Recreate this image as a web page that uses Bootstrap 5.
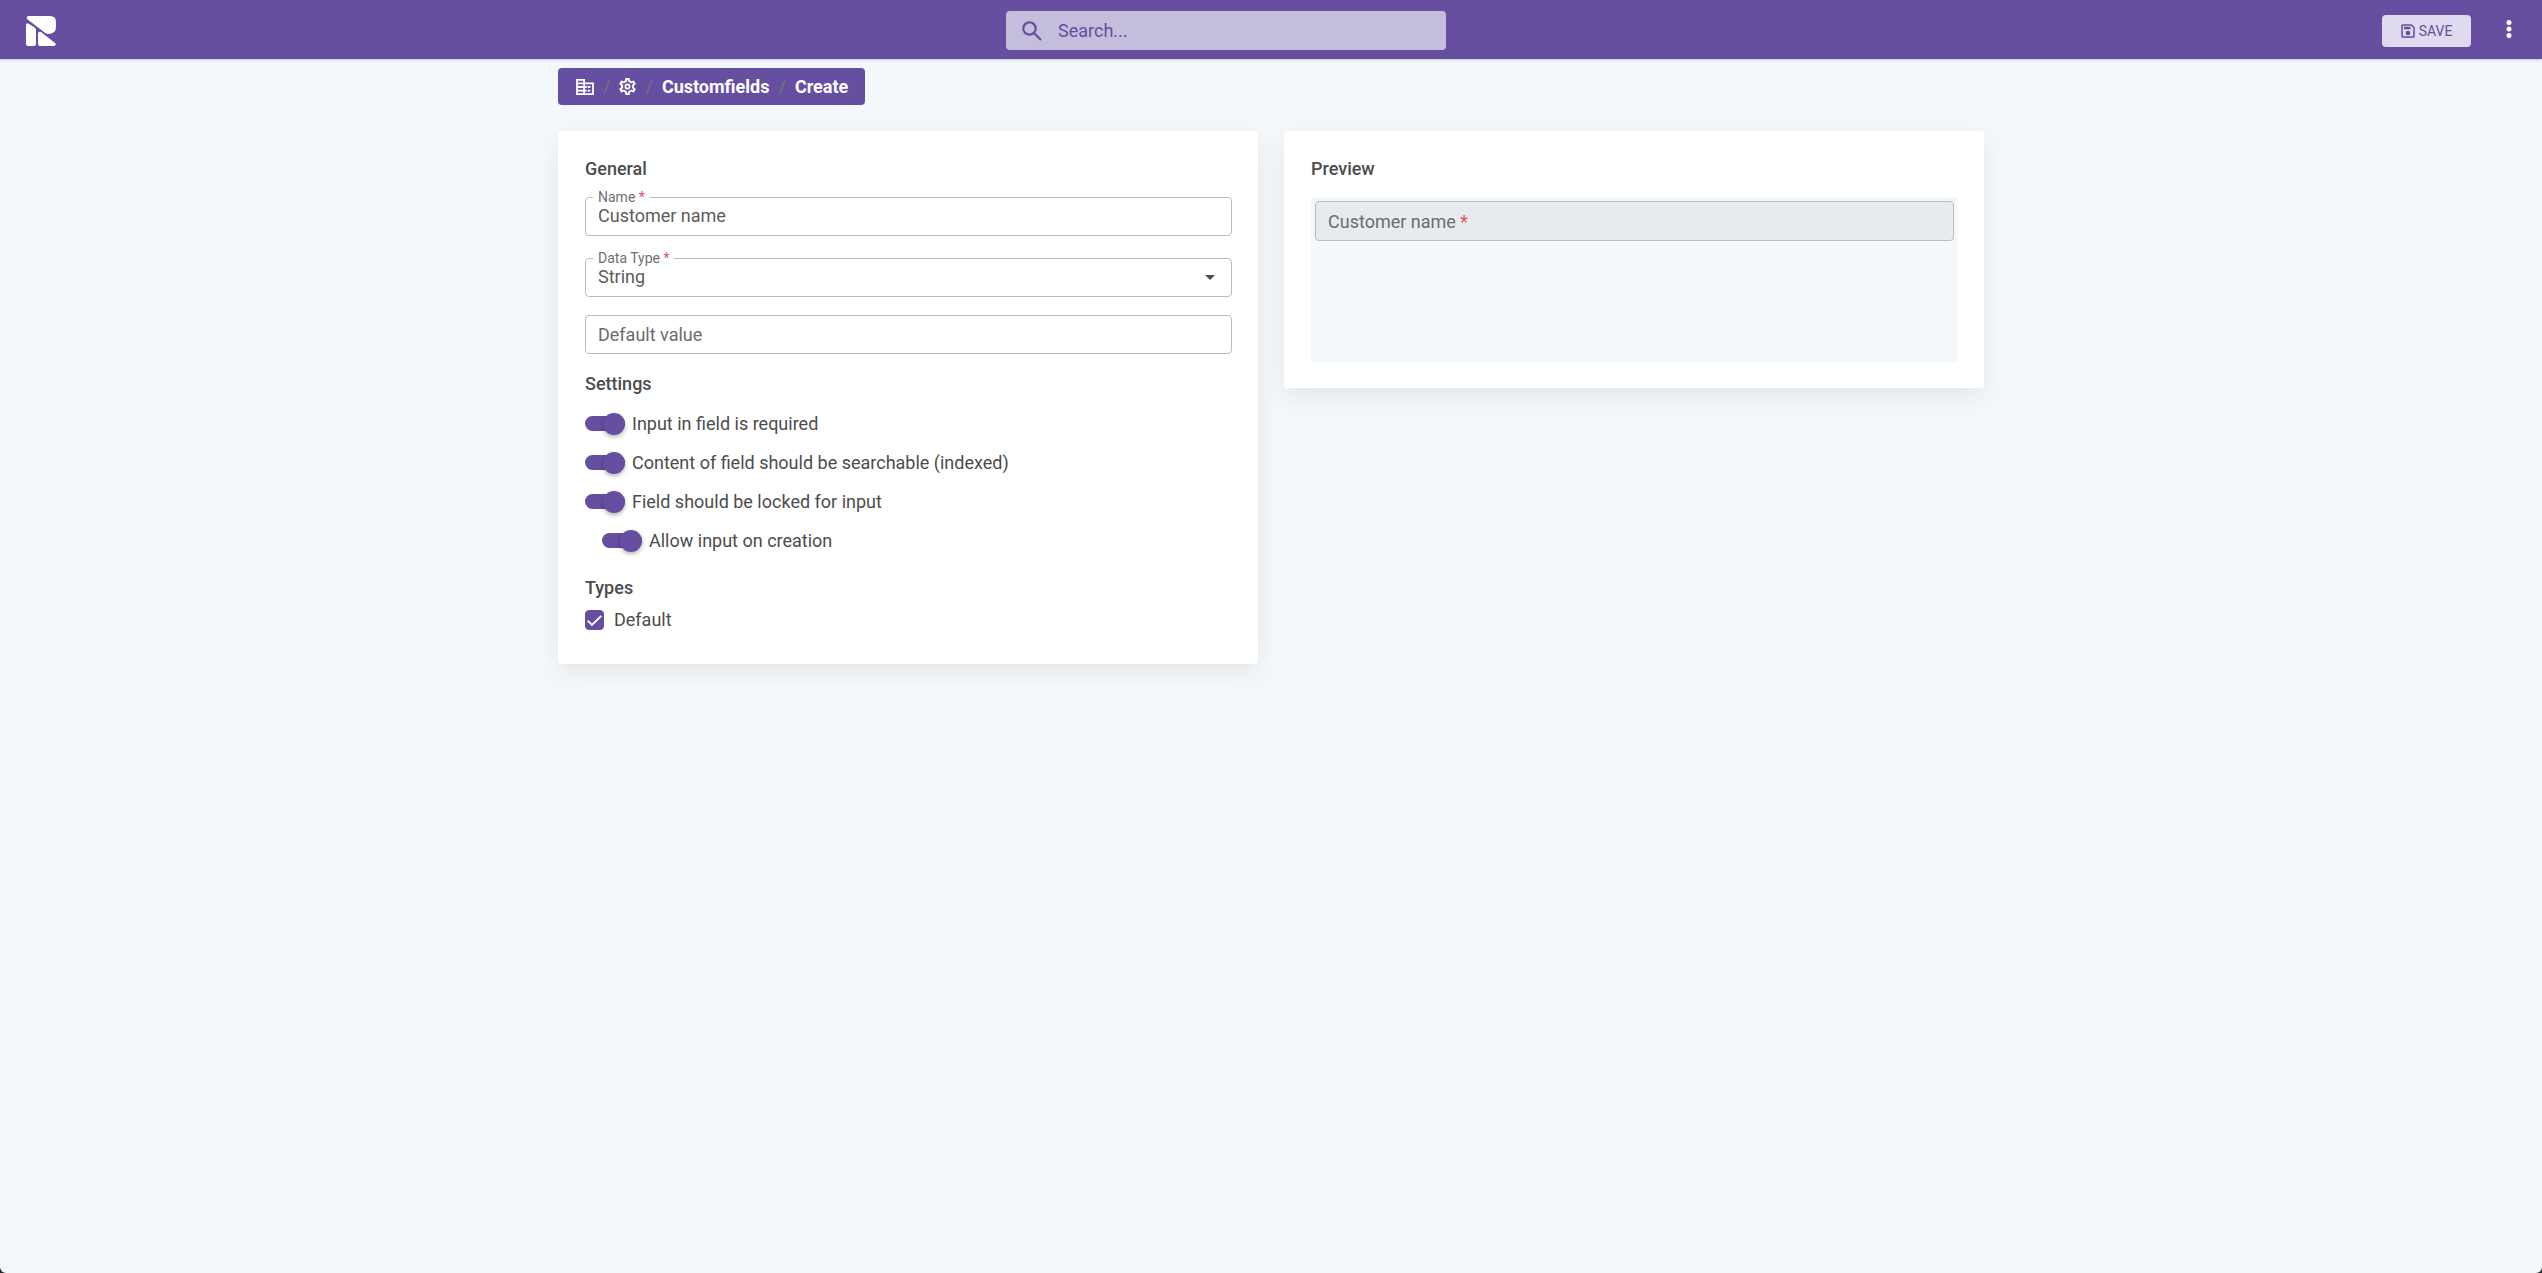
<!DOCTYPE html>
<html lang="en">
<head>
<meta charset="utf-8">
<meta name="viewport" content="width=device-width, initial-scale=1">
<title>Customfields - Create</title>
<link href="https://cdn.jsdelivr.net/npm/bootstrap@5.3.0/dist/css/bootstrap.min.css" rel="stylesheet">
<style>
:root { --brand: #664ea1; --page: #f4f8fb; --line: #bcbcbc; --ink: #4c4c4c; }
html { background: #26282b; }
body { min-height: 100vh; background: var(--page); color: var(--ink); font: 400 18px/24px Roboto, "Liberation Sans", sans-serif; border-radius: 0 0 6px 6px; }
.topbar { height: 59px; padding-top: 2px; background: var(--brand); box-shadow: 0 1px 3px rgba(0,0,0,.2); }
.topbar-start { flex: 0 0 calc(50% - 265px); padding-left: 26px; }
.topbar-search { width: 440px; height: 39px; padding: 0 16px; border-radius: 4px; background: #c5bddc; color: var(--brand); }
.topbar-search input { padding: 0; border: 0; background: none; color: inherit; font-size: 18px; line-height: 24px; outline: 0; }
.topbar-search input::placeholder { color: var(--brand); opacity: 1; }
.btn-save { width: 89px; height: 32px; padding: 0; border-radius: 4px; border: 0; background: #e0daf1; color: var(--brand); font-size: 14px; line-height: 20px; }
.btn-menu { width: 71px; height: 57px; padding: 0 0 4px 4px; border: 0; }
.page-wrap { max-width: 1426px; }
.crumbs { height: 37px; padding: 0 17px 0 18px; margin: 9px 0 26px; border-radius: 4px; background: var(--brand); color: #fff; font-weight: 700; }
.crumbs a { color: #fff; text-decoration: none; }
.crumbs li + li::before { content: "/"; color: #757575; font-weight: 400; padding: 0 9px; }
.panels { display: grid; grid-template-columns: repeat(auto-fit, minmax(min(100%, 500px), 1fr)); gap: 26px; align-items: start; }
.panel { padding: 26px; border: 0; border-radius: 4px; box-shadow: 0 9px 26px rgba(0,0,0,.07); color: inherit; }
.panel-inner { padding-left: 1px; }
.panel h2 { margin: 0 0 16px; font-size: 18px; line-height: 24px; font-weight: 500; }
.panel h2.tight { margin-bottom: 8px; }
.field-gap { margin-bottom: 22px; }
.field-gap-sm { margin-bottom: 18px; }
.outlined { position: relative; }
.outlined .form-control, .outlined .form-select { height: 39px; padding: 0 12px; border: 1px solid var(--line); border-radius: 4px; color: #5c5c5c; font-size: 18px; line-height: 24px; }
.outlined .has-float { padding-bottom: 2px; }
.outlined .form-control::placeholder { color: #6c6c6c; opacity: 1; }
.outlined .form-select { background: #fff url("data:image/svg+xml,%3Csvg xmlns='http://www.w3.org/2000/svg' viewBox='0 0 10 5'%3E%3Cpath fill='%234c4c4c' d='M0 0h10L5 5z'/%3E%3C/svg%3E") no-repeat right 16px center / 10px 5px; }
.outlined > .float-label { position: absolute; left: 8px; top: -9px; padding: 0 5px; background: #fff; color: #707070; font-size: 14px; line-height: 18px; }
.outlined > .inner-label { position: absolute; left: 13px; top: 9px; color: #6c6c6c; }
.outlined .form-control:disabled { height: 40px; background: #e8ebed; }
.req { color: #e5505c; }
.toggle-row { display: flex; align-items: center; gap: 7px; height: 39px; }
.toggle-row .form-check-input { flex: none; width: 40px; height: 15px; margin: 0; border: 0; border-radius: 8px; background: #bdbdbd; }
.toggle-row .form-check-input::before { content: ""; display: block; width: 22px; height: 22px; margin: -3px 0 0; border-radius: 50%; background: #fff; box-shadow: 0 2px 4px rgba(0,0,0,.3); }
.toggle-row .form-check-input:checked { background: var(--brand); }
.toggle-row .form-check-input:checked::before { margin-left: 18px; background: var(--brand); }
.toggle-sub { padding-left: 17px; }
.tick-row { display: flex; align-items: center; gap: 10px; height: 24px; margin-bottom: 6px; }
.tick-row .form-check-input { width: 19px; height: 20px; margin: 0; border-radius: 4px; }
.tick-row .form-check-input:checked { border-color: var(--brand); background: var(--brand) url("data:image/svg+xml,%3Csvg xmlns='http://www.w3.org/2000/svg' viewBox='0 0 20 20'%3E%3Cpath fill='none' stroke='%23fff' stroke-width='2.2' d='M2 10.2l5 5L18 4.5'/%3E%3C/svg%3E") center / 100% no-repeat; }
.preview-area { min-height: 165px; padding: 4px; background: var(--page); }
</style>
</head>
<body>
<header class="topbar d-flex align-items-center">
  <div class="topbar-start d-flex">
    <a href="#" class="d-flex" aria-label="Home">
      <svg width="30" height="30" viewBox="0 0 30 30" fill="#fff"><path d="M2 0H24Q30 0 30 6V11Q30 18 22 18Q20 18 18 16L1 3Q0 1 2 0Z"/><path d="M0 9Q0 6 3 8L8 11Q10 12 10 14V28Q10 30 8 30H2Q0 30 0 28Z"/><path d="M12 28V18Q12 15 15 16L29 27Q31 29 28 30H14Q12 30 12 28Z"/></svg>
    </a>
  </div>
  <form class="topbar-search d-flex align-items-center gap-3" role="search">
    <svg class="flex-shrink-0" width="20" height="20" viewBox="0 0 20 20" fill="none" stroke="#664ea1" stroke-width="2.200"><circle cx="7.500" cy="7.500" r="6.200"/><path d="M12 12l7 7"/></svg>
    <input class="w-100" type="search" placeholder="Search..." aria-label="Search">
  </form>
  <div class="d-flex align-items-center ms-auto">
    <button type="button" class="btn btn-save d-flex align-items-center justify-content-center gap-1">
      <svg width="14" height="14" viewBox="0 0 14 14" fill="none" stroke="#664ea1" stroke-width="1.500"><path d="M1.700 1h8.800L13 3.500v8.800q0 .7-.7.700H1.700q-.7 0-.7-.7V1.700q0-.7.7-.7z"/><path d="M3 4h6.500" stroke-width="2.500"/><circle cx="7" cy="9" r="1.600" fill="#664ea1"/></svg><span>SAVE</span>
    </button>
    <button type="button" class="btn btn-menu" aria-label="More"><svg width="6" height="18" viewBox="0 0 6 18" fill="#fff"><circle cx="3" cy="2.500" r="2.500"/><circle cx="3" cy="9" r="2.500"/><circle cx="3" cy="15.500" r="2.500"/></svg></button>
  </div>
</header>
<main class="page-wrap mx-auto">
  <nav class="d-flex" aria-label="breadcrumb">
    <ol class="crumbs list-unstyled d-flex align-items-center">
      <li class="d-flex align-items-center"><a href="#" class="d-flex" aria-label="Company"><svg width="18" height="16" viewBox="2 3 20 18" fill="#fff"><path d="M12 7V3H2v18h20V7H12zM10 19H4v-2h6v2zm0-4H4v-2h6v2zm0-4H4V9h6v2zm0-4H4V5h6v2zm10 12h-8v-2h2v-2h-2v-2h2v-2h-2V9h8v10zm-2-8h-3v2h3v-2zm0 4h-3v2h3v-2z"/></svg></a></li>
      <li class="d-flex align-items-center"><a href="#" class="d-flex" aria-label="Settings"><svg width="17" height="17" viewBox="2 2 20 20" fill="#fff"><path d="M19.430 12.980c.04-.32.07-.64.07-.98s-.03-.66-.07-.98l2.110-1.650c.19-.15.24-.42.12-.64l-2-3.460c-.12-.22-.39-.3-.61-.22l-2.490 1c-.52-.4-1.080-.73-1.690-.98l-.38-2.650C14.460 2.180 14.250 2 14 2h-4c-.25 0-.46.18-.49.42l-.38 2.650c-.61.25-1.170.59-1.690.98l-2.490-1c-.23-.09-.49 0-.61.22l-2 3.460c-.13.22-.07.49.12.64l2.110 1.650c-.04.32-.07.65-.07.98s.03.66.07.98l-2.110 1.650c-.19.15-.24.42-.12.64l2 3.460c.12.22.39.3.61.22l2.490-1c.52.4 1.080.73 1.690.98l.38 2.650c.03.24.24.42.49.42h4c.25 0 .46-.18.49-.42l.38-2.650c.61-.25 1.170-.59 1.690-.98l2.490 1c.23.09.49 0 .61-.22l2-3.460c.12-.22.07-.49-.12-.64zm-2-1.700c.1.800.1.640 0 1.440l-.2 1.100 1.700 1.300-.7 1.250-2-.8-.9.700q-.6.450-1.200.7l-1.030.4-.3 2.130h-1.400l-.3-2.130-1.030-.4q-.65-.25-1.200-.7l-.9-.7-2 .8-.7-1.250 1.700-1.300-.2-1.100c-.1-.8-.1-.64 0-1.440l.2-1.100-1.700-1.300.7-1.250 2 .8.900-.7q.6-.45 1.200-.7l1.030-.4.3-2.130h1.400l.3 2.130 1.030.4q.65.25 1.200.7l.9.700 2-.8.7 1.250-1.700 1.300zM12 8.500a3.500 3.500 0 100 7 3.500 3.500 0 000-7zm0 5a1.500 1.500 0 110-3 1.500 1.500 0 010 3z" fill-rule="evenodd"/></svg></a></li>
      <li><a href="#">Customfields</a></li>
      <li aria-current="page">Create</li>
    </ol>
  </nav>
  <div class="panels">
    <form class="card panel">
     <div class="panel-inner">
      <h2>General</h2>
      <div class="outlined field-gap">
        <input class="form-control has-float" id="name" value="Customer name" required>
        <label class="float-label" for="name">Name <span class="req">*</span></label>
      </div>
      <div class="outlined field-gap-sm">
        <select class="form-select has-float" id="type"><option>String</option></select>
        <label class="float-label" for="type">Data Type <span class="req">*</span></label>
      </div>
      <div class="outlined field-gap-sm">
        <input class="form-control" id="def" placeholder="Default value" aria-label="Default value">
      </div>
      <h2 class="tight">Settings</h2>
      <div class="toggle-row"><input class="form-check-input" type="checkbox" role="switch" id="s1" checked><label for="s1">Input in field is required</label></div>
      <div class="toggle-row"><input class="form-check-input" type="checkbox" role="switch" id="s2" checked><label for="s2">Content of field should be searchable (indexed)</label></div>
      <div class="toggle-row"><input class="form-check-input" type="checkbox" role="switch" id="s3" checked><label for="s3">Field should be locked for input</label></div>
      <div class="toggle-row toggle-sub"><input class="form-check-input" type="checkbox" role="switch" id="s4" checked><label for="s4">Allow input on creation</label></div>
      <h2 class="tight mt-3">Types</h2>
      <div class="tick-row"><input class="form-check-input" type="checkbox" id="t1" checked><label for="t1">Default</label></div>
     </div>
    </form>
    <section class="card panel">
     <div class="panel-inner">
      <h2>Preview</h2>
      <div class="preview-area">
        <div class="outlined">
          <input class="form-control" id="pv" disabled>
          <label class="inner-label" for="pv">Customer name <span class="req">*</span></label>
        </div>
      </div>
     </div>
    </section>
  </div>
</main>
<script src="https://cdn.jsdelivr.net/npm/bootstrap@5.3.0/dist/js/bootstrap.bundle.min.js"></script>
</body>
</html>
